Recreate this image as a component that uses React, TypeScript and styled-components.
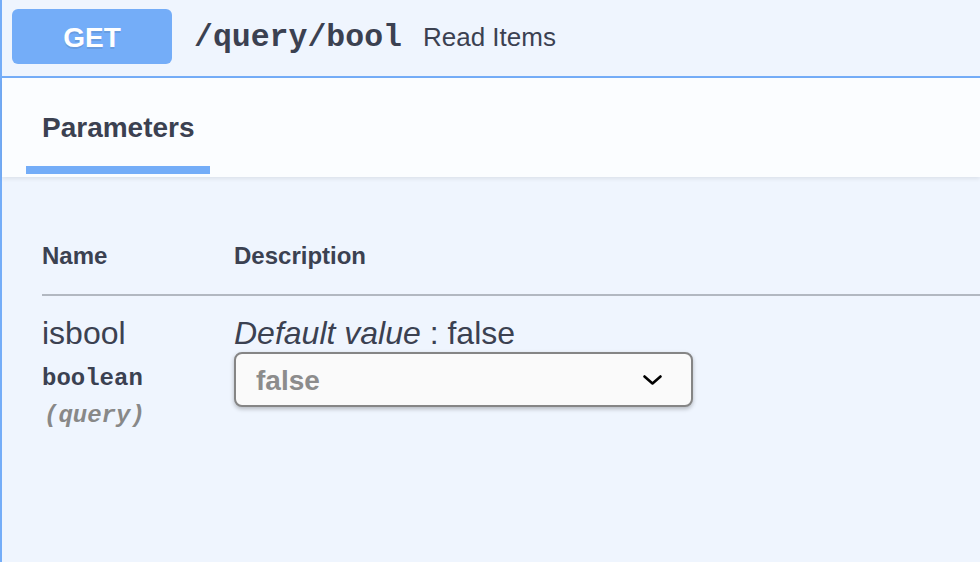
import React from "react";
import styled, { createGlobalStyle } from "styled-components";

const Global = createGlobalStyle`
  html, body { margin: 0; padding: 0; background: #eff5fe; }
  body { font-family: "Liberation Sans", Arial, sans-serif; color: #3b4151; }
  * { box-sizing: border-box; }
`;

const Opblock = styled.div`
  min-height: 562px;
  border-left: 2px solid #74adf8;
  background: #eff5fe;
  display: flex;
  flex-direction: column;
`;

const Summary = styled.div`
  height: 78px;
  border-bottom: 2px solid #74adf8;
  display: flex;
  align-items: flex-start;
  padding: 9px 0 0 10px;
`;

const Method = styled.div`
  width: 160px;
  height: 55px;
  border-radius: 6px;
  background: #74adf8;
  color: #fff;
  font-family: "Liberation Sans", Arial, sans-serif;
  font-weight: 700;
  font-size: 28px;
  padding-top: 2px;
  display: flex;
  align-items: center;
  justify-content: center;
  text-shadow: 0 2px 0 rgba(0, 0, 0, 0.1);
`;

const PathText = styled.span`
  margin-left: 22px;
  height: 55px;
  padding-top: 2px;
  display: flex;
  align-items: center;
  font-family: "Liberation Mono", "Courier New", monospace;
  font-weight: 700;
  font-size: 31.5px;
  color: #3b4151;
`;

const Summ = styled.span`
  margin-left: 21px;
  height: 55px;
  padding-top: 2px;
  display: flex;
  align-items: center;
  font-size: 26px;
  color: #3b4151;
`;

const TabSection = styled.div`
  height: 99px;
  background: #fbfdff;
  box-shadow: 0 2px 4px rgba(0, 0, 0, 0.08);
  padding: 34px 0 0 24px;
  display: flex;
  position: relative;
`;

const Tab = styled.div`
  display: flex;
  flex-direction: column;
`;

const TabTitle = styled.h4`
  margin: 0;
  padding: 0 15px 0 16px;
  font-size: 28px;
  line-height: 32px;
  font-weight: 700;
  color: #3b4151;
`;

const TabBar = styled.div`
  margin-top: 22px;
  height: 8px;
  background: #74adf8;
`;

const Table = styled.div`
  padding: 65px 0 0 40px;
  display: grid;
  grid-template-columns: 192px 1fr;
`;

const HeadCell = styled.div`
  font-size: 24px;
  line-height: 28px;
  font-weight: 700;
  padding-bottom: 24px;
  border-bottom: 2px solid #b2b8c1;
`;

const Cell = styled.div`
  padding-top: 19px;
  display: flex;
  flex-direction: column;
  align-items: flex-start;
`;

const ParamName = styled.div`
  font-size: 32px;
  line-height: 36px;
  color: #3b4151;
`;

const ParamType = styled.div`
  margin-top: 14px;
  font-family: "Liberation Mono", "Courier New", monospace;
  font-weight: 700;
  font-size: 24px;
  line-height: 28px;
  color: #3b4151;
`;

const ParamIn = styled.div`
  margin-top: 9px;
  padding-left: 2px;
  font-family: "Liberation Mono", "Courier New", monospace;
  font-weight: 700;
  font-style: italic;
  font-size: 24px;
  line-height: 28px;
  color: #888888;
`;

const DefaultLine = styled.div`
  font-size: 32px;
  line-height: 36px;
  color: #3b4151;
  i { font-style: italic; }
`;

const SelectWrap = styled.div`
  position: relative;
  margin-top: 1px;
  width: 459px;
`;

const Select = styled.select`
  appearance: none;
  -webkit-appearance: none;
  width: 459px;
  height: 55px;
  border: 2px solid #858585;
  border-radius: 8px;
  background: #fafafa;
  box-shadow: 0 2px 4px rgba(0, 0, 0, 0.25);
  padding: 2px 60px 0 20px;
  font-family: "Liberation Sans", Arial, sans-serif;
  font-weight: 700;
  font-size: 28px;
  color: #8c8c8c;
  opacity: 1;
  &:disabled { color: #8c8c8c; opacity: 1; }
`;

const Chevron = styled.svg`
  position: absolute;
  right: 31px;
  top: 23px;
  width: 19px;
  height: 10px;
  pointer-events: none;
`;

export default function App() {
  return (
    <>
      <Global />
      <Opblock>
        <Summary>
          <Method>GET</Method>
          <PathText>/query/bool</PathText>
          <Summ>Read Items</Summ>
        </Summary>
        <TabSection>
          <Tab>
            <TabTitle>Parameters</TabTitle>
            <TabBar />
          </Tab>
        </TabSection>
        <Table>
          <HeadCell>Name</HeadCell>
          <HeadCell>Description</HeadCell>
          <Cell>
            <ParamName>isbool</ParamName>
            <ParamType>boolean</ParamType>
            <ParamIn>(query)</ParamIn>
          </Cell>
          <Cell>
            <DefaultLine>
              <i>Default value</i> : false
            </DefaultLine>
            <SelectWrap>
              <Select disabled defaultValue="false">
                <option value="--">--</option>
                <option value="true">true</option>
                <option value="false">false</option>
              </Select>
              <Chevron viewBox="0 0 19 10">
                <path d="M1.5 1.5 L9.5 8.5 L17.5 1.5" fill="none" stroke="#000" strokeWidth="2.6" strokeLinecap="round" strokeLinejoin="round" />
              </Chevron>
            </SelectWrap>
          </Cell>
        </Table>
      </Opblock>
    </>
  );
}
